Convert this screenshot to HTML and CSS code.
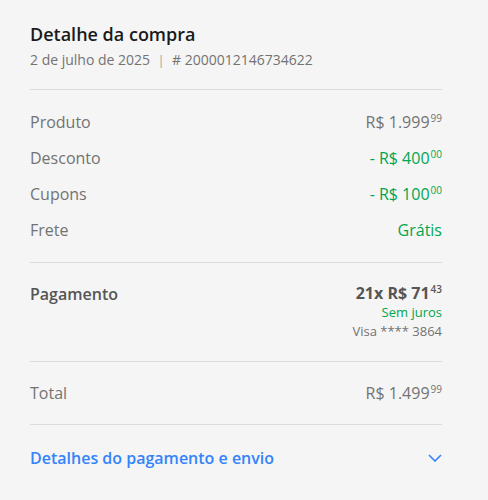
FILE: index.html
```html
<!DOCTYPE html>
<html lang="pt-BR">
<head>
  <meta charset="UTF-8" />
  <meta name="viewport" content="width=device-width, initial-scale=1.0" />
  <title>Detalhe da compra</title>
  <link rel="stylesheet" href="styles.css">
</head>

<body>
  <div class="summary">
    <header class="head">
      <h1 class="title">Detalhe da compra</h1>
      <div class="meta">2 de julho de 2025 <span class="sep">|</span> # 2000012146734622</div>
    </header>

    <section class="block lines">
      <div class="line">
        <span class="label">Produto</span>
        <span class="price">R$ 1.999<sup>99</sup></span>
      </div>
      <div class="line">
        <span class="label">Desconto</span>
        <span class="price green">- R$ 400<sup>00</sup></span>
      </div>
      <div class="line">
        <span class="label">Cupons</span>
        <span class="price green">- R$ 100<sup>00</sup></span>
      </div>
      <div class="line">
        <span class="label">Frete</span>
        <span class="price green">Grátis</span>
      </div>
    </section>

    <section class="block payment">
      <span class="label strong">Pagamento</span>
      <div class="pay-info">
        <span class="price strong bold">21x R$ 71<sup>43</sup></span>
        <span class="small green">Sem juros</span>
        <span class="small">Visa **** 3864</span>
      </div>
    </section>

    <section class="block total">
      <span class="label">Total</span>
      <span class="price">R$ 1.499<sup>99</sup></span>
    </section>

    <button class="toggle">
      <span>Detalhes do pagamento e envio</span>
      <svg width="14" height="8" viewBox="0 0 14 8" fill="none">
        <path d="M1 1l6 6 6-6" stroke="#3483fa" stroke-width="1.6" />
      </svg>
    </button>
  </div>
</body>
</html>
```

FILE: styles.css
```css
:root {
  --text: #1a1a1a;
  --muted: #737373;
  --green: #00a650;
  --blue: #3483fa;
  --line: #dcdcdc;
  --bg: #f5f5f5;
}

* {
  box-sizing: border-box;
}

body {
  margin: 0;
  font-family: "Open Sans", "Liberation Sans", sans-serif;
  background: var(--bg);
  color: var(--muted);
}

.summary {
  width: 412px;
  margin-left: 30px;
  padding-top: 22px;
}

.head {
  padding-bottom: 19px;
  border-bottom: 1px solid var(--line);
}

.title {
  margin: 0;
  font-size: 18px;
  font-weight: 600;
  color: var(--text);
  line-height: 24px;
}

.meta {
  margin-top: 4px;
  font-size: 14px;
  line-height: 19px;
}

.sep {
  margin: 0 4px;
  font-size: 12px;
  color: #999;
}

.block {
  border-bottom: 1px solid var(--line);
}

.lines {
  padding: 14px 0;
}

.line {
  display: flex;
  justify-content: space-between;
  align-items: center;
  height: 36px;
}

.label {
  font-size: 16px;
}

.price {
  font-size: 16px;
}

.price sup {
  font-size: 10px;
  line-height: 0;
  vertical-align: 6px;
  margin-left: 1px;
}

.green {
  color: var(--green);
}

.strong {
  font-weight: 600;
  color: #555;
}

.bold {
  font-weight: 700;
}

.bold sup {
  font-weight: 600;
}

.payment {
  display: flex;
  justify-content: space-between;
  align-items: flex-start;
  padding: 20px 0;
}

.pay-info {
  display: flex;
  flex-direction: column;
  align-items: flex-end;
}

.pay-info .price {
  line-height: 20px;
}

.small {
  font-size: 13px;
  line-height: 19px;
}

.total {
  display: flex;
  justify-content: space-between;
  align-items: center;
  height: 63px;
}

.toggle {
  width: 100%;
  display: flex;
  justify-content: space-between;
  align-items: center;
  padding: 0;
  height: 66px;
  background: none;
  border: none;
  font-family: inherit;
  font-size: 16px;
  font-weight: 600;
  color: var(--blue);
  cursor: pointer;
}
```
